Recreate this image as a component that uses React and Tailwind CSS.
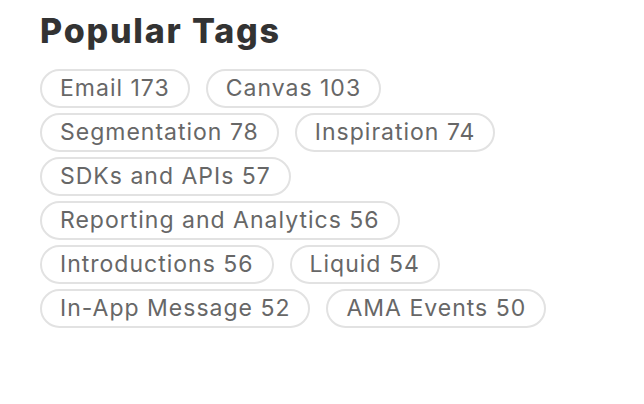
import React from "react";

const tags = [
  ["Email", 173],
  ["Canvas", 103],
  ["Segmentation", 78],
  ["Inspiration", 74],
  ["SDKs and APIs", 57],
  ["Reporting and Analytics", 56],
  ["Introductions", 56],
  ["Liquid", 54],
  ["In-App Message", 52],
  ["AMA Events", 50],
];

export default function App() {
  return (
    <div className="w-[644px] h-[404px] bg-white px-10 pt-[9px]" style={{ fontFamily: "Inter, 'Open Sans', sans-serif" }}>
      <h2 className="text-[34px] leading-[44px] font-extrabold text-[#333333] tracking-[1.8px]">Popular Tags</h2>
      <div className="mt-[16px] flex flex-wrap gap-x-4 gap-y-[5px]">
        {tags.map(([name, n]) => (
          <a
            key={name}
            className="h-[39px] px-[18px] flex items-center rounded-full border-2 border-[#e2e2e2] text-[23px] tracking-[1px] text-[#676767] whitespace-nowrap"
          >
            {name} {n}
          </a>
        ))}
      </div>
    </div>
  );
}
